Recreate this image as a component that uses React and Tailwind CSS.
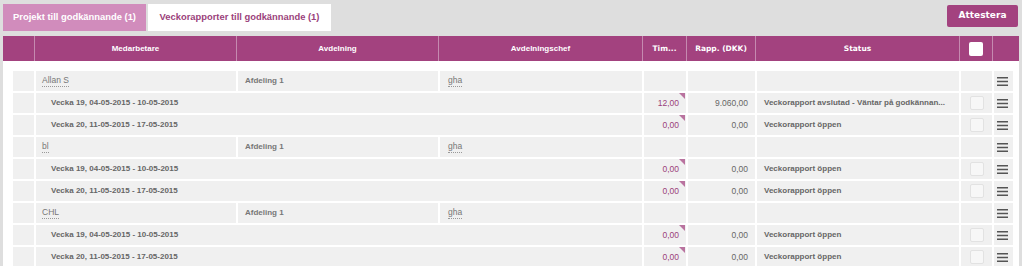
import React from "react";

function Menu() {
  return (
    <svg width="11" height="9" viewBox="0 0 11 9" className="block">
      <rect x="0" y="0" width="11" height="1.5" fill="#555" />
      <rect x="0" y="3.75" width="11" height="1.5" fill="#555" />
      <rect x="0" y="7.5" width="11" height="1.5" fill="#555" />
    </svg>
  );
}

function Check() {
  return <div className="w-[14px] h-[14px] rounded-[2px] border border-[#e2e2e2] bg-[#f7f7f7]" />;
}

function PersonRow({ name }) {
  return (
    <div className="flex h-[20px] bg-[#f0f0f0]">
      <div className="w-[21px]" />
      <div className="w-[202px] border-l-2 border-white flex items-center pl-[6px]">
        <span className="text-[#777] text-[8.5px] leading-[11px] border-b border-dotted border-[#999]">{name}</span>
      </div>
      <div className="w-[202px] border-l-2 border-white flex items-center pl-[7px] font-bold text-[#777]">Afdeling 1</div>
      <div className="w-[204px] border-l-2 border-white flex items-center pl-[8px]">
        <span className="text-[#777] text-[8.5px] leading-[11px] border-b border-dotted border-[#999]">gha</span>
      </div>
      <div className="w-[44px] border-l-2 border-white" />
      <div className="w-[69px] border-l-2 border-white" />
      <div className="w-[204px] border-l-2 border-white" />
      <div className="w-[33px] border-l-2 border-white" />
      <div className="w-[21px] border-l-2 border-white flex items-center justify-center pr-[3px]">
        <Menu />
      </div>
    </div>
  );
}

function WeekRow({ label, tim, rapp, status }) {
  return (
    <div className="flex h-[20px] bg-[#f0f0f0]">
      <div className="w-[21px]" />
      <div className="w-[608px] border-l-2 border-white flex items-center pl-[15px] font-bold text-[#666]">{label}</div>
      <div className="w-[44px] border-l-2 border-white relative flex items-center justify-end pr-[7px] text-[#9b3f7b] text-[8.5px]">
        {tim}
        <div className="absolute top-0 right-[1px] w-0 h-0 border-l-[6px] border-l-transparent border-t-[6px] border-t-[#b9739f]" />
      </div>
      <div className="w-[69px] border-l-2 border-white flex items-center justify-end pr-[7px] text-[#666] text-[8.5px]">{rapp}</div>
      <div className="w-[204px] border-l-2 border-white flex items-center pl-[7px] font-bold text-[#666] whitespace-nowrap overflow-hidden">{status}</div>
      <div className="w-[33px] border-l-2 border-white flex items-center justify-center">
        <Check />
      </div>
      <div className="w-[21px] border-l-2 border-white flex items-center justify-center pr-[3px]">
        <Menu />
      </div>
    </div>
  );
}

export default function App() {
  const hdr = "border-l border-[#c58ab0] flex items-center justify-center";
  const dv = { fontFamily: '"DejaVu Sans", Verdana, sans-serif', fontSize: "7.5px" };
  return (
    <div className="w-[1022px] h-[266px] overflow-hidden bg-[#dedede] text-[8px]" style={{ fontFamily: '"Liberation Sans", Arial, sans-serif' }}>
      <div className="flex items-start h-[36px] pl-[3px] pr-[4px]">
        <div className="mt-[4px] h-[27px] w-[143px] bg-[#d18cbc] text-white font-bold text-[9.4px] whitespace-nowrap flex items-center justify-center">
          Projekt till godkännande (1)
        </div>
        <div className="mt-[4px] ml-[2px] h-[27px] w-[183px] bg-white text-[#9b3f7b] font-bold text-[9.4px] whitespace-nowrap flex items-center justify-center">
          Veckorapporter till godkännande (1)
        </div>
        <div className="flex-1" />
        <div className="mt-[5px] h-[22px] w-[71px] rounded-[2px] bg-[#a3427f] text-white font-bold text-[9px] flex items-center justify-center" style={{ fontFamily: '"DejaVu Sans", Verdana, sans-serif' }}>
          Attestera
        </div>
      </div>
      <div className="ml-[3px] w-[1016px] bg-white h-[230px]">
        <div className="flex h-[25px] bg-[#a3427f] text-white font-bold text-[8px]">
          <div className="w-[31px]" />
          <div className={`${hdr} w-[202px]`}>Medarbetare</div>
          <div className={`${hdr} w-[202px]`}>Avdelning</div>
          <div className={`${hdr} w-[204px]`}>Avdelningschef</div>
          <div className={`${hdr} w-[44px]`} style={dv}>Tim...</div>
          <div className={`${hdr} w-[69px]`} style={dv}>Rapp. (DKK)</div>
          <div className={`${hdr} w-[204px]`} style={dv}>Status</div>
          <div className={`${hdr} w-[33px]`}>
            <div className="w-[14px] h-[14px] bg-white rounded-[2px]" />
          </div>
          <div className={`${hdr} flex-1`} />
        </div>
        <div className="pl-[10px] pr-[6px] pt-[10px] flex flex-col gap-[2px]">
          <PersonRow name="Allan S" />
          <WeekRow label="Vecka 19, 04-05-2015 - 10-05-2015" tim="12,00" rapp="9.060,00" status="Veckorapport avslutad - Väntar på godkännan..." />
          <WeekRow label="Vecka 20, 11-05-2015 - 17-05-2015" tim="0,00" rapp="0,00" status="Veckorapport öppen" />
          <PersonRow name="bl" />
          <WeekRow label="Vecka 19, 04-05-2015 - 10-05-2015" tim="0,00" rapp="0,00" status="Veckorapport öppen" />
          <WeekRow label="Vecka 20, 11-05-2015 - 17-05-2015" tim="0,00" rapp="0,00" status="Veckorapport öppen" />
          <PersonRow name="CHL" />
          <WeekRow label="Vecka 19, 04-05-2015 - 10-05-2015" tim="0,00" rapp="0,00" status="Veckorapport öppen" />
          <WeekRow label="Vecka 20, 11-05-2015 - 17-05-2015" tim="0,00" rapp="0,00" status="Veckorapport öppen" />
        </div>
      </div>
    </div>
  );
}
